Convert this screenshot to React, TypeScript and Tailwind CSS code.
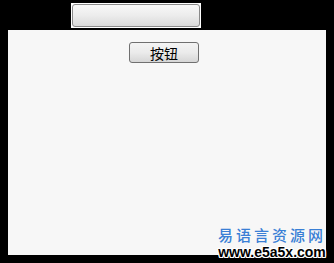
import React from "react";

export default function App() {
  return (
    <div className="relative w-[334px] h-[263px] bg-black overflow-hidden" style={{ fontFamily: '"Liberation Sans", "Noto Sans CJK SC", sans-serif' }}>
      <div className="pt-[3px] pl-[71px]">
        <div className="w-[130px] h-[25px] border border-white bg-white">
          <div className="w-full h-full rounded-[3px] border border-[#8a8a8a] bg-gradient-to-b from-[#f8f8f8] via-[#ececec] to-[#d9d9d9]" />
        </div>
      </div>
      <div className="ml-[8px] mt-[2px] w-[318px] h-[225px] bg-[#f7f7f7] pt-[12px] pl-[121px]">
        <button className="w-[70px] h-[21px] rounded-[3px] border border-[#707070] bg-gradient-to-b from-[#f4f4f4] via-[#ebebeb] to-[#d6d6d6] flex items-center justify-center text-[14px] leading-none text-black" style={{ fontFamily: '"Noto Sans CJK SC", sans-serif' }}>
          按钮
        </button>
      </div>
      <div className="absolute left-[216px] top-[226px] w-[112px] flex flex-col items-center">
        <div className="text-[15px] leading-[17px] font-medium tracking-[3px] text-[#3a7fd5] whitespace-nowrap" style={{ fontFamily: '"Noto Sans CJK SC", sans-serif' }}>
          易语言资源网
        </div>
        <div className="mt-[2px] text-[14px] leading-[15px] font-bold text-black whitespace-nowrap [text-shadow:1px_0_0_#fff,-1px_0_0_#fff,0_1px_0_#fff,0_-1px_0_#fff,1px_1px_0_#fff,-1px_-1px_0_#fff,1px_-1px_0_#fff,-1px_1px_0_#fff]">
          www.e5a5x.com
        </div>
      </div>
    </div>
  );
}
